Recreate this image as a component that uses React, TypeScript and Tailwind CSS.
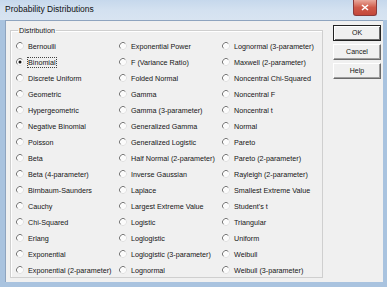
import React from "react";

const columns: string[][] = [
  [
    "Bernoulli",
    "Binomial",
    "Discrete Uniform",
    "Geometric",
    "Hypergeometric",
    "Negative Binomial",
    "Poisson",
    "Beta",
    "Beta (4-parameter)",
    "Birnbaum-Saunders",
    "Cauchy",
    "Chi-Squared",
    "Erlang",
    "Exponential",
    "Exponential (2-parameter)",
  ],
  [
    "Exponential Power",
    "F (Variance Ratio)",
    "Folded Normal",
    "Gamma",
    "Gamma (3-parameter)",
    "Generalized Gamma",
    "Generalized Logistic",
    "Half Normal (2-parameter)",
    "Inverse Gaussian",
    "Laplace",
    "Largest Extreme Value",
    "Logistic",
    "Loglogistic",
    "Loglogistic (3-parameter)",
    "Lognormal",
  ],
  [
    "Lognormal (3-parameter)",
    "Maxwell (2-parameter)",
    "Noncentral Chi-Squared",
    "Noncentral F",
    "Noncentral t",
    "Normal",
    "Pareto",
    "Pareto (2-parameter)",
    "Rayleigh (2-parameter)",
    "Smallest Extreme Value",
    "Student's t",
    "Triangular",
    "Uniform",
    "Weibull",
    "Weibull (3-parameter)",
  ],
];

const RadioDot = ({ checked }: { checked: boolean }) => (
  <svg width="8" height="8" viewBox="0 0 8 8" className="shrink-0">
    <circle cx="4" cy="4" r="3.5" fill="#fbfbfb" />
    <path d="M1.5 6.5 A3.5 3.5 0 0 1 6.5 1.5" fill="none" stroke="#7a7a7a" strokeWidth="1" />
    <path d="M6.5 1.5 A3.5 3.5 0 0 1 1.5 6.5" fill="none" stroke="#e2e2e2" strokeWidth="1" />
    {checked && <circle cx="4" cy="4" r="1.5" fill="#111" />}
  </svg>
);

const Radio = ({ label, checked }: { label: string; checked: boolean }) => (
  <div className="flex items-center gap-[4px] h-[16px]">
    <RadioDot checked={checked} />
    <span
      className={
        checked
          ? "outline outline-1 outline-dotted outline-[#444] leading-[9px] whitespace-nowrap"
          : "leading-[9px] whitespace-nowrap"
      }
    >
      {label}
    </span>
  </div>
);

const DlgButton = ({ label, isDefault }: { label: string; isDefault?: boolean }) => (
  <div
    className={
      isDefault
        ? "w-[48px] h-[16px] border border-[#222] bg-[#f0f0f0] shadow-[inset_1px_1px_0_#fff,inset_-1px_-1px_0_#6a6a6a] flex items-center justify-center text-[7px]"
        : "w-[48px] h-[16px] border border-t-[#fff] border-l-[#fff] border-b-[#6a6a6a] border-r-[#6a6a6a] bg-[#f0f0f0] shadow-[inset_-1px_-1px_0_#a0a0a0] flex items-center justify-center text-[7px]"
    }
  >
    {label}
  </div>
);

export default function App() {
  return (
    <div
      className="w-[387px] h-[287px] flex flex-col overflow-hidden bg-[#a9c3df] text-[#151515]"
      style={{ fontFamily: '"Liberation Sans", Arial, sans-serif' }}
    >
      {/* title bar */}
      <div className="h-[20px] flex items-start justify-between bg-gradient-to-b from-[#c6d8ec] via-[#d3e1f0] to-[#d8e4f1]">
        <span className="pl-[5px] pt-[4px] text-[8.5px] leading-[11px] text-[#111]">
          Probability Distributions
        </span>
        <div className="mr-[10px] w-[24px] h-[16px] rounded-b-[3px] border border-t-0 border-[#8a3a3a] bg-gradient-to-b from-[#e8a89c] via-[#cf5a4a] to-[#c4473a] flex items-center justify-center">
          <svg width="8" height="7" viewBox="0 0 8 7">
            <path d="M1 1 L7 6 M7 1 L1 6" stroke="#fff" strokeWidth="1.6" />
          </svg>
        </div>
      </div>

      <div className="flex-1 flex">
        <div className="w-[5px]" />
        {/* client area */}
        <div className="flex-1 flex bg-[#f0f0f0] border-l border-t border-[#8ea4bf] text-[7.2px]">
          <fieldset className="mt-[5px] ml-[4px] w-[309px] h-[252px] border border-[#cfcfcf] shadow-[inset_1px_1px_0_#fff] pl-[5px] pt-[3px]">
            <legend className="ml-[2px] px-[1px] leading-[9px]">Distribution</legend>
            <div className="grid grid-flow-col grid-rows-[repeat(15,16px)] grid-cols-[103px_103px_100px]">
              {columns.map((col, ci) =>
                col.map((label) => (
                  <Radio key={ci + label} label={label} checked={label === "Binomial"} />
                ))
              )}
            </div>
          </fieldset>
          <div className="ml-[10px] mt-[4px] flex flex-col gap-[3px]">
            <DlgButton label="OK" isDefault />
            <DlgButton label="Cancel" />
            <DlgButton label="Help" />
          </div>
        </div>
        <div className="w-[4px]" />
      </div>
      <div className="h-[5px]" />
    </div>
  );
}
